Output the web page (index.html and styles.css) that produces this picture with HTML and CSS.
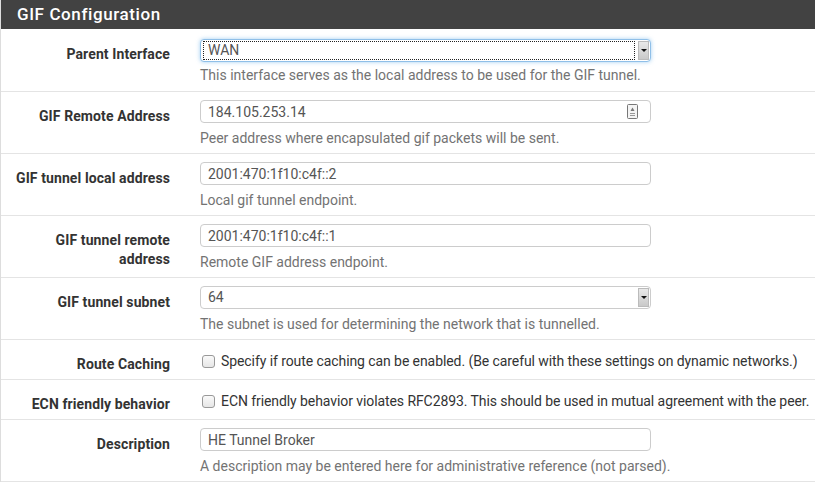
FILE: index.html
```html
<!DOCTYPE html>
<html>
<head>
<meta charset="utf-8">
<link rel="stylesheet" href="styles.css">
</head>
<body>
<div class="panel">
  <div class="panel-heading"><h2 class="panel-title">GIF Configuration</h2></div>
  <div class="panel-body">
    <div class="row row-first">
      <div class="label">Parent Interface</div>
      <div class="field">
        <div class="select focused"><span class="select-text">WAN</span><span class="arrow"><span class="tri"></span></span></div>
        <div class="help">This interface serves as the local address to be used for the GIF tunnel.</div>
      </div>
    </div>
    <div class="row">
      <div class="label">GIF Remote Address</div>
      <div class="field">
        <div class="input">184.105.253.14
          <svg class="autofill" width="11" height="15" viewBox="0 0 11 15"><rect x="0.5" y="0.5" width="10" height="14" rx="1" fill="#f4f4f4" stroke="#777"/><path d="M5.5 3.5 L7.5 7 L3.5 7 Z" fill="#777"/><path d="M3 9.5 H8 M3 11.5 H8" stroke="#999" stroke-width="1"/></svg>
        </div>
        <div class="help">Peer address where encapsulated gif packets will be sent.</div>
      </div>
    </div>
    <div class="row">
      <div class="label">GIF tunnel local address</div>
      <div class="field">
        <div class="input">2001:470:1f10:c4f::2</div>
        <div class="help">Local gif tunnel endpoint.</div>
      </div>
    </div>
    <div class="row">
      <div class="label">GIF tunnel remote<br>address</div>
      <div class="field">
        <div class="input">2001:470:1f10:c4f::1</div>
        <div class="help">Remote GIF address endpoint.</div>
      </div>
    </div>
    <div class="row">
      <div class="label">GIF tunnel subnet</div>
      <div class="field">
        <div class="select"><span class="select-text">64</span><span class="arrow"><span class="tri"></span></span></div>
        <div class="help">The subnet is used for determining the network that is tunnelled.</div>
      </div>
    </div>
    <div class="row row-check">
      <div class="label">Route Caching</div>
      <div class="field check-field">
        <span class="checkbox"></span><span class="check-text">Specify if route caching can be enabled. (Be careful with these settings on dynamic networks.)</span>
      </div>
    </div>
    <div class="row row-check">
      <div class="label">ECN friendly behavior</div>
      <div class="field check-field">
        <span class="checkbox"></span><span class="check-text">ECN friendly behavior violates RFC2893. This should be used in mutual agreement with the peer.</span>
      </div>
    </div>
    <div class="row">
      <div class="label">Description</div>
      <div class="field">
        <div class="input">HE Tunnel Broker</div>
        <div class="help">A description may be entered here for administrative reference (not parsed).</div>
      </div>
    </div>
  </div>
</div>
</body>
</html>
```

FILE: styles.css
```css
html, body {
  margin: 0;
  padding: 0;
  background: #fff;
}
body {
  font-family: Roboto, "Liberation Sans", sans-serif;
  font-size: 14px;
  color: #333;
  width: 815px;
  height: 483px;
  overflow: hidden;
}
.panel {
  border-left: 1px solid #ddd;
  width: 830px;
}
.panel-heading {
  background: #424242;
  height: 29px;
  display: flex;
  align-items: center;
  padding-left: 16px;
}
.panel-title {
  margin: 0;
  color: #fff;
  font-size: 17px;
  font-weight: 500;
  letter-spacing: 0.6px;
  line-height: 29px;
}
.row {
  display: flex;
  border-bottom: 1px solid #e4e4e4;
  height: 62px;
  box-sizing: border-box;
}
.row-first {
  height: 63px;
}
.row-check {
  height: 40px;
}
.label {
  width: 169px;
  flex: none;
  text-align: right;
  font-weight: bold;
  line-height: 19px;
  letter-spacing: 0.1px;
  padding-top: 15px;
  box-sizing: border-box;
}
.row-first .label {
  padding-top: 16px;
}
.field {
  margin-left: 30px;
  padding-top: 8px;
}
.row-first .field {
  padding-top: 10px;
}
.row-first .help {
  margin-top: 4px;
}
.select, .input {
  width: 451px;
  height: 23px;
  box-sizing: border-box;
  border: 1px solid #ccc;
  border-radius: 4px;
  display: flex;
  align-items: center;
  color: #555;
  padding-left: 7px;
  position: relative;
  background: #fff;
}
.select.focused {
  border-color: #8fbfe8;
  box-shadow: 0 0 4px rgba(102, 175, 233, 0.6);
}
.select-text {
  flex: 1;
  height: 17px;
  line-height: 17px;
}
.focused .select-text {
  outline: 1px dotted #222;
  margin-left: -4px;
  padding-left: 4px;
  margin-right: 4px;
}
.arrow {
  width: 11px;
  height: 19px;
  margin-right: 1px;
  background: linear-gradient(#e9e9e9, #c9c9c9);
  border: 1px solid #bbb;
  box-sizing: border-box;
  display: flex;
  align-items: center;
  justify-content: center;
}
.tri {
  width: 0;
  height: 0;
  border-left: 3px solid transparent;
  border-right: 3px solid transparent;
  border-top: 3px solid #111;
}
.autofill {
  position: absolute;
  right: 12px;
  top: 3px;
}
.help {
  color: #737373;
  margin-top: 6px;
  line-height: 19px;
}
.check-field {
  display: flex;
  align-items: center;
  padding-top: 11px;
  height: 20px;
}
.row-check .label {
  padding-top: 15px;
}
.checkbox {
  width: 11px;
  height: 11px;
  border: 1px solid #999;
  border-radius: 3px;
  background: linear-gradient(#fafafa, #e6e6e6);
  margin-left: 2px;
  margin-right: 6px;
  flex: none;
}
.check-text {
  color: #333;
  white-space: nowrap;
  letter-spacing: -0.08px;
}
```
